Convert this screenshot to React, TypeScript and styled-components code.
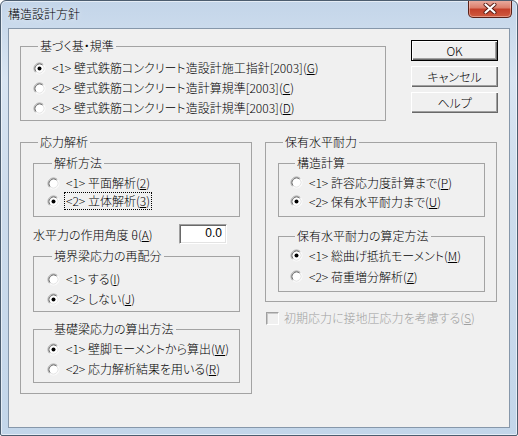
import React from 'react';
import styled, { createGlobalStyle } from 'styled-components';

const GlobalStyle = createGlobalStyle`
  html, body {
    margin: 0;
    padding: 0;
    background: #ffffff;
  }
  body {
    font-family: "Noto Sans CJK JP", "Liberation Sans", sans-serif;
    font-size: 12px;
    font-weight: 300;
    color: #000;
  }
`;

const Window = styled.div`
  box-sizing: border-box;
  width: 518px;
  height: 436px;
  display: flex;
  flex-direction: column;
  padding: 0 7px 7px 7px;
  border: 1px solid #4c5d6f;
  border-radius: 6px 6px 2px 2px;
  background: linear-gradient(180deg, #c3d5e9 0%, #d9e5f2 18%, #cddcec 45%, #c3d6ea 100%);
  box-shadow: inset 0 0 0 1px rgba(255, 255, 255, 0.55);
  overflow: hidden;
`;

const TitleBar = styled.div`
  position: relative;
  height: 27px;
  display: flex;
  align-items: center;
  flex-shrink: 0;
`;

const Title = styled.span`
  font-size: 12px;
  line-height: 14px;
  margin-top: -1px;
  color: #000;
  text-shadow: 0 0 6px rgba(255, 255, 255, 0.9);
`;

const CloseButton = styled.div`
  position: absolute;
  top: -1px;
  right: -2px;
  width: 44px;
  height: 18px;
  box-sizing: border-box;
  border: 1px solid #5a2118;
  border-top: none;
  border-radius: 0 0 5px 5px;
  background: linear-gradient(180deg, #eab0a4 0%, #dc7f6c 45%, #c4402a 55%, #cf5a3f 100%);
  box-shadow: inset 0 0 0 1px rgba(255, 220, 210, 0.45);
  display: flex;
  align-items: center;
  justify-content: center;
`;

const Client = styled.div`
  flex: 1;
  box-sizing: border-box;
  border: 1px solid #8697aa;
  background: #f0f0f0;
  padding: 10px 11px 0 11px;
  display: flex;
  flex-direction: column;
`;

const TopRow = styled.div`
  display: flex;
  align-items: flex-start;
  gap: 25px;
`;

const BottomRow = styled.div`
  display: flex;
  align-items: flex-start;
  gap: 13px;
  margin-top: 14px;
`;

const Column = styled.div<{ $width: number }>`
  width: ${p => p.$width}px;
  display: flex;
  flex-direction: column;
`;

const Group = styled.fieldset<{ $width?: number; $pad: string; $mt?: number }>`
  box-sizing: border-box;
  width: ${p => (p.$width ? `${p.$width}px` : 'auto')};
  margin: ${p => p.$mt ?? 0}px 0 0 0;
  padding: ${p => p.$pad};
  border: 1px solid #a3a3a3;
  min-width: 0;
  display: flex;
  flex-direction: column;
`;

const Legend = styled.legend`
  font-size: 12px;
  line-height: 14px;
  padding: 0 2px;
  margin-left: 5px;
  font-feature-settings: "palt";
`;

const OptionRow = styled.label<{ $h: number }>`
  height: ${p => p.$h}px;
  display: flex;
  align-items: center;
  gap: 6px;
  font-feature-settings: "palt";
  white-space: nowrap;
`;

const OptionText = styled.span<{ $focus?: boolean; $disabled?: boolean }>`
  line-height: 16px;
  padding: 0 1px;
  margin-left: -1px;
  outline: ${p => (p.$focus ? '1px dotted #000' : 'none')};
  color: ${p => (p.$disabled ? '#a0a0a0' : '#000')};
`;

const ButtonStack = styled.div`
  display: flex;
  flex-direction: column;
  gap: 5px;
  margin-top: 1px;
`;

const Button = styled.button<{ $default?: boolean }>`
  width: 87px;
  height: 21px;
  box-sizing: border-box;
  padding: 0;
  font-family: "Noto Sans CJK JP", "Liberation Sans", sans-serif;
  font-size: 12px;
  font-weight: 300;
  font-feature-settings: "palt";
  color: #000;
  background: #f0f0f0;
  border: ${p => (p.$default ? '1px solid #000' : 'none')};
  box-shadow: inset 1px 1px 0 #ffffff, inset -1px -1px 0 #696969, inset -2px -2px 0 #a0a0a0;
`;

const AngleRow = styled.div`
  display: flex;
  align-items: center;
  height: 20px;
  margin-top: 7px;
  font-feature-settings: "palt";
`;

const AngleLabel = styled.span`
  flex: 1;
  white-space: pre;
`;

const NumberField = styled.div`
  width: 48px;
  height: 20px;
  box-sizing: border-box;
  margin-right: 13px;
  background: #fff;
  border-top: 1px solid #a0a0a0;
  border-left: 1px solid #a0a0a0;
  border-right: 1px solid #ffffff;
  border-bottom: 1px solid #ffffff;
  box-shadow: inset 1px 1px 0 #696969, inset -1px -1px 0 #e3e3e3;
  text-align: right;
  padding-right: 4px;
  line-height: 17px;
  font-family: "Liberation Sans", sans-serif;
  font-size: 12px;
  font-weight: 400;
`;

const CheckRow = styled.div`
  display: flex;
  align-items: center;
  gap: 5px;
  height: 18px;
  margin-top: 7px;
  margin-left: 1px;
  font-feature-settings: "palt";
`;

const CheckBoxShape = styled.span`
  width: 13px;
  height: 13px;
  box-sizing: border-box;
  background: #f0f0f0;
  border-top: 1px solid #a0a0a0;
  border-left: 1px solid #a0a0a0;
  border-right: 1px solid #ffffff;
  border-bottom: 1px solid #ffffff;
  box-shadow: inset 1px 1px 0 #c8c8c8;
`;

const Radio: React.FC<{ checked?: boolean }> = ({ checked }) => (
  <svg width="13" height="13" viewBox="0 0 13 13" style={{ flexShrink: 0 }}>
    <circle cx="6.5" cy="6.5" r="5" fill="#ffffff" />
    <path d="M2.61 10.39 A5.5 5.5 0 0 1 10.39 2.61" fill="none" stroke="#a0a0a0" strokeWidth="1" />
    <path d="M10.39 2.61 A5.5 5.5 0 0 1 2.61 10.39" fill="none" stroke="#ffffff" strokeWidth="1" />
    <path d="M3.32 9.68 A4.5 4.5 0 0 1 9.68 3.32" fill="none" stroke="#696969" strokeWidth="1" />
    <path d="M9.68 3.32 A4.5 4.5 0 0 1 3.32 9.68" fill="none" stroke="#e3e3e3" strokeWidth="1" />
    {checked && <circle cx="6.5" cy="6.5" r="2" fill="#000" />}
  </svg>
);

type Opt = { label: string; key: string; checked?: boolean; focus?: boolean };

const Option: React.FC<{ opt: Opt; h: number }> = ({ opt, h }) => (
  <OptionRow $h={h}>
    <Radio checked={opt.checked} />
    <OptionText $focus={opt.focus}>
      {opt.label}(<u>{opt.key}</u>)
    </OptionText>
  </OptionRow>
);

const standards: Opt[] = [
  { label: '<1> 壁式鉄筋コンクリート造設計施工指針[2003]', key: 'G', checked: true },
  { label: '<2> 壁式鉄筋コンクリート造計算規準[2003]', key: 'C' },
  { label: '<3> 壁式鉄筋コンクリート造設計規準[2003]', key: 'D' },
];

const methods: Opt[] = [
  { label: '<1> 平面解析', key: '2' },
  { label: '<2> 立体解析', key: '3', checked: true, focus: true },
];

const redistribution: Opt[] = [
  { label: '<1> する', key: 'I' },
  { label: '<2> しない', key: 'J', checked: true },
];

const foundation: Opt[] = [
  { label: '<1> 壁脚モーメントから算出', key: 'W', checked: true },
  { label: '<2> 応力解析結果を用いる', key: 'R' },
];

const calc: Opt[] = [
  { label: '<1> 許容応力度計算まで', key: 'P' },
  { label: '<2> 保有水平耐力まで', key: 'U', checked: true },
];

const ultimate: Opt[] = [
  { label: '<1> 総曲げ抵抗モーメント', key: 'M', checked: true },
  { label: '<2> 荷重増分解析', key: 'Z' },
];

const App: React.FC = () => (
  <>
    <GlobalStyle />
    <Window>
      <TitleBar>
        <Title>構造設計方針</Title>
        <CloseButton>
          <svg width="14" height="11" viewBox="0 0 14 11">
            <path d="M2.5 1.5 L11.5 9.5 M11.5 1.5 L2.5 9.5" stroke="#5a1d14" strokeWidth="4" strokeLinecap="round" />
            <path d="M2.5 1.5 L11.5 9.5 M11.5 1.5 L2.5 9.5" stroke="#ffffff" strokeWidth="2.2" strokeLinecap="round" />
          </svg>
        </CloseButton>
      </TitleBar>
      <Client>
        <TopRow>
          <Group $width={367} $pad="5px 10px 2px 12px">
            <Legend>基づく基・規準</Legend>
            {standards.map(o => (
              <Option key={o.key} opt={o} h={20} />
            ))}
          </Group>
          <ButtonStack>
            <Button $default>OK</Button>
            <Button>キャンセル</Button>
            <Button>ヘルプ</Button>
          </ButtonStack>
        </TopRow>
        <BottomRow>
          <Group $width={232} $pad="7px 11px 10px 12px">
            <Legend>応力解析</Legend>
            <Group $pad="4px 8px 6px 13px">
              <Legend>解析方法</Legend>
              {methods.map(o => (
                <Option key={o.key} opt={o} h={18} />
              ))}
            </Group>
            <AngleRow>
              <AngleLabel>
                水平力の作用角度 θ(<u>A</u>)
              </AngleLabel>
              <NumberField>0.0</NumberField>
            </AngleRow>
            <Group $mt={5} $pad="6px 8px 2px 13px">
              <Legend>境界梁応力の再配分</Legend>
              {redistribution.map(o => (
                <Option key={o.key} opt={o} h={20} />
              ))}
            </Group>
            <Group $mt={10} $pad="3px 8px 3px 13px">
              <Legend>基礎梁応力の算出方法</Legend>
              {foundation.map(o => (
                <Option key={o.key} opt={o} h={20} />
              ))}
            </Group>
          </Group>
          <Column $width={232}>
            <Group $pad="7px 11px 9px 12px">
              <Legend>保有水平耐力</Legend>
              <Group $pad="3px 8px 5px 11px">
                <Legend>構造計算</Legend>
                {calc.map(o => (
                  <Option key={o.key} opt={o} h={19} />
                ))}
              </Group>
              <Group $mt={12} $pad="2px 8px 4px 11px">
                <Legend>保有水平耐力の算定方法</Legend>
                {ultimate.map(o => (
                  <Option key={o.key} opt={o} h={21} />
                ))}
              </Group>
            </Group>
            <CheckRow>
              <CheckBoxShape />
              <OptionText $disabled>
                初期応力に接地圧応力を考慮する(<u>S</u>)
              </OptionText>
            </CheckRow>
          </Column>
        </BottomRow>
      </Client>
    </Window>
  </>
);

export default App;
